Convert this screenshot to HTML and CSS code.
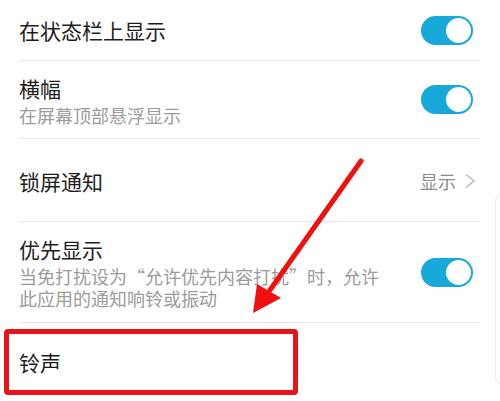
FILE: index.html
```html
<!DOCTYPE HTML>
<html>
	<head>
		<meta charset='utf-8' />
		<title>通知设置</title>
		<link rel="stylesheet" href="styles.css">
	</head>
	<body>
		<div class='page'>
			<ul class='settings'>
				<li class='row row1'>
					<div class='text'><div class='title'>在状态栏上显示</div></div>
					<span class='switch'><i></i></span>
				</li>
				<li class='row row2'>
					<div class='text'>
						<div class='title'>横幅</div>
						<div class='sub'>在屏幕顶部悬浮显示</div>
					</div>
					<span class='switch'><i></i></span>
				</li>
				<li class='row row3'>
					<div class='text'><div class='title'>锁屏通知</div></div>
					<span class='value'>显示</span>
					<svg class='chevron' width='13' height='16' viewBox='0 0 13 16'>
						<path d='M2 1.5 L10 8 L2 14.5' fill='none' stroke='#bdbdbd' stroke-width='1.6' />
					</svg>
				</li>
				<li class='row row4'>
					<div class='text'>
						<div class='title'>优先显示</div>
						<div class='sub'>当免打扰设为“允许优先内容打扰”时，允许此应用的通知响铃或振动</div>
					</div>
					<span class='switch'><i></i></span>
				</li>
				<li class='row row5'>
					<div class='text'><div class='title'>铃声</div></div>
				</li>
			</ul>
			<div class='edge'></div>
			<div class='mark'></div>
			<svg class='arrow' width='500' height='401' viewBox='0 0 500 401'>
				<line x1='361' y1='161' x2='270' y2='290' stroke='#f01010' stroke-width='5' stroke-linecap='round' />
				<polygon points='253,313 257,284 281,298' fill='#f01010' />
			</svg>
		</div>
	</body>
</html>
```

FILE: styles.css
```css
body{margin:0;background:#fff;}
ul,li{margin:0;padding:0;list-style:none;}

.page{
	position:relative;
	width:500px;
	height:401px;
	overflow:hidden;
	font-family:"Noto Sans CJK SC", "Noto Sans", sans-serif;
}
.settings{
	padding:0 20px 0 19px;
}
.row{
	display:flex;
	align-items:center;
	box-sizing:border-box;
	border-bottom:1px solid #e8e8e8;
}
.row1{height:61px;}
.row2{height:78px;}
.row3{height:83px;padding-top:2px;}
.row4{height:101px;}
.row5{height:78px;border-bottom:none;}

.text{flex:1;}
.title{
	font-size:21px;
	line-height:28px;
	color:#1e1e1e;
}
.sub{
	margin-top:2px;
	max-width:370px;
	font-size:18px;
	line-height:22px;
	color:#9b9b9b;
}
.value{
	font-size:18px;
	color:#8c8c8c;
	margin-right:8px;
}
.chevron{
	display:block;
	margin-right:3px;
}

.switch{
	display:flex;
	justify-content:flex-end;
	align-items:center;
	box-sizing:border-box;
	width:52px;
	height:29px;
	padding:2px;
	margin-right:7px;
	border-radius:15px;
	background:#16a9da;
}
.switch i{
	display:block;
	width:25px;
	height:25px;
	border-radius:50%;
	background:#fff;
}

/* faint card edge at the right border */
.edge{
	position:absolute;
	left:495px;
	top:193px;
	width:20px;
	height:190px;
	border:1px solid #ececec;
	border-radius:8px;
}
/* red highlight box */
.mark{
	position:absolute;
	left:4px;
	top:329px;
	width:284px;
	height:56px;
	border:5px solid #e8121a;
	border-radius:4px;
}
.arrow{
	position:absolute;
	left:0;
	top:0;
	pointer-events:none;
}
```
